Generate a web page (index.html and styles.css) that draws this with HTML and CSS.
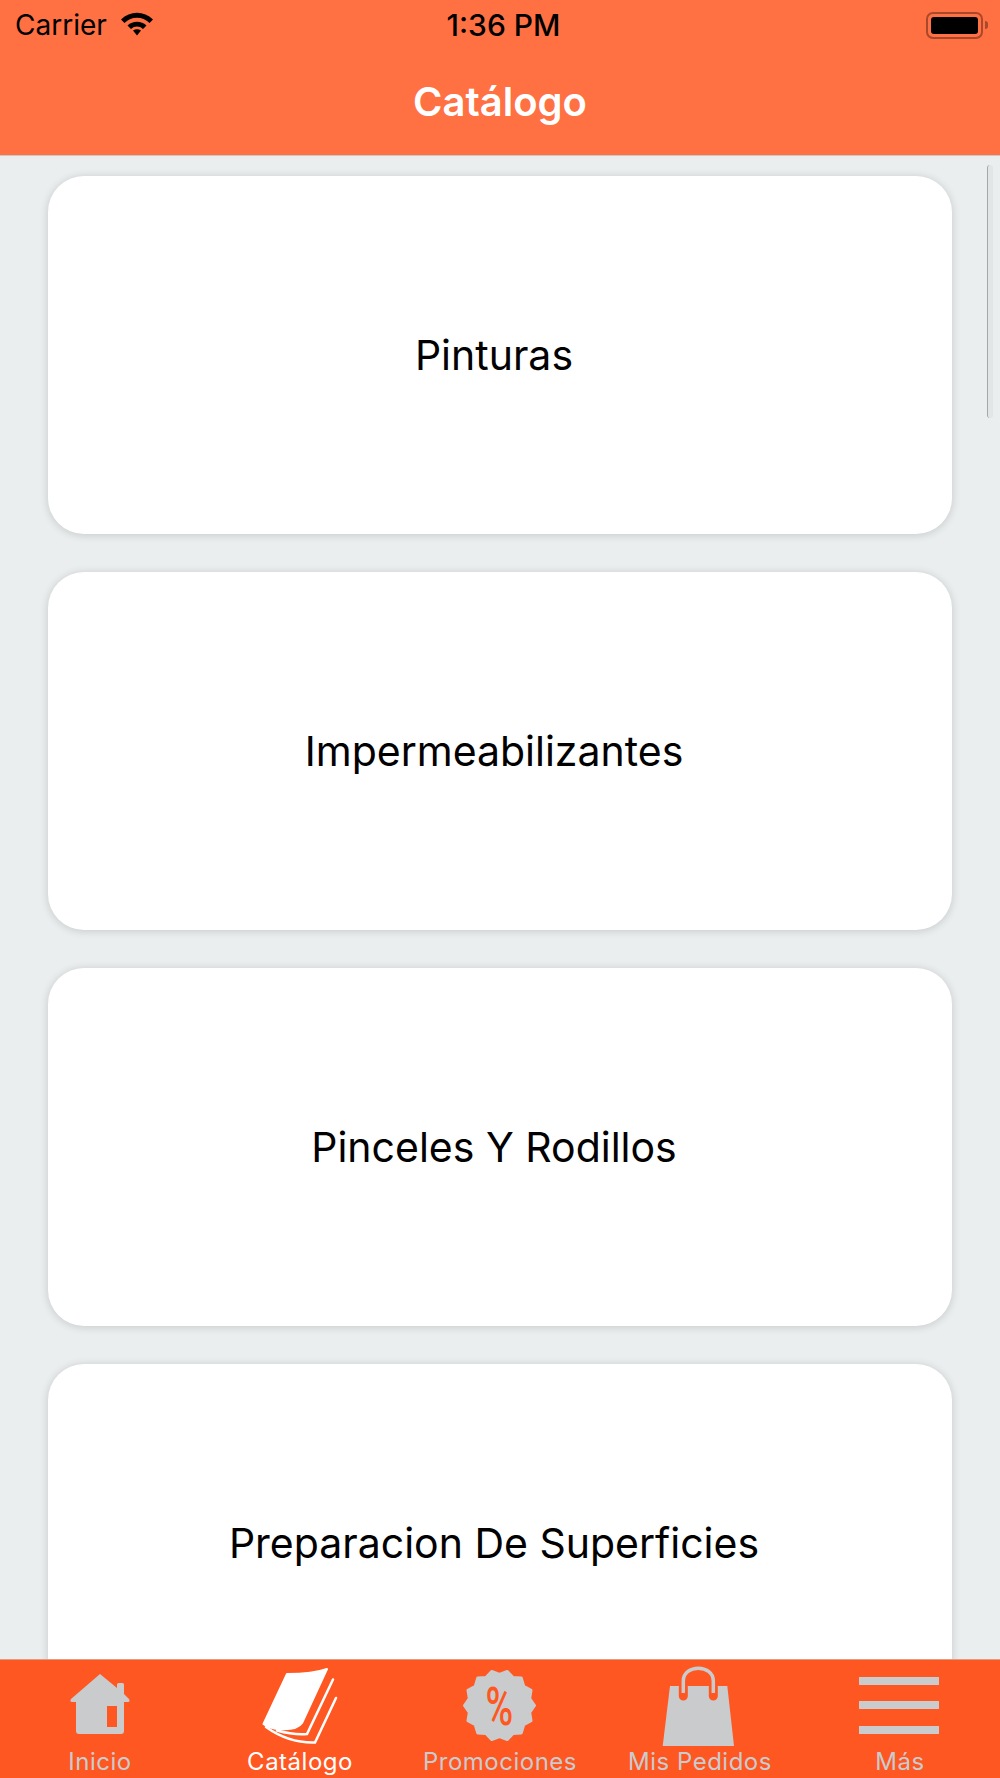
FILE: index.html
```html
<!DOCTYPE html>
<html lang="en">
<head>
  <meta charset="UTF-8">
  <title>Catálogo</title>
  <link rel="stylesheet" href="styles.css">
</head>
<body>
  <div class="app">
    <header class="top">
      <div class="status">
        <div class="status-left">
          <span>Carrier</span>
          <svg class="wifi" width="34" height="24" viewBox="0 0 34 24">
            <path d="M1 7.500C10 -1.500 24 -1.500 33 7.500L29.500 11C22.500 4 11.500 4 4.500 11Z"/>
            <path d="M7.500 13.500C12.800 8.500 21.200 8.500 26.500 13.500L23 17C19.500 13.700 14.500 13.700 11 17Z"/>
            <path d="M13 18.500C15.500 16.800 18.500 16.800 21 18.500L17 23.500Z"/>
          </svg>
        </div>
        <div class="status-time">1:36 PM</div>
        <div class="status-right">
          <div class="battery"><div class="battery-level"></div></div>
          <div class="battery-cap"></div>
        </div>
      </div>
      <h1 class="title">Catálogo</h1>
    </header>

    <main class="list">
      <div class="card">Pinturas</div>
      <div class="card">Impermeabilizantes</div>
      <div class="card">Pinceles Y Rodillos</div>
      <div class="card">Preparacion De Superficies</div>
      <div class="scrollbar"></div>
    </main>

    <nav class="tabs">
      <div class="tab">
        <svg class="tab-icon" viewBox="0 0 80 80">
          <path class="icon-fill" d="M40 7L57 21V17.500Q57 16 58.500 16H62.500Q64 16 64 17.500V27L69 32Q70.500 35 68 35H64V64Q64 67 61 67H19Q16 67 16 64V35H12Q9.500 35 11 32Z"/>
          <rect class="icon-hole" x="47" y="39" width="10" height="21"/>
        </svg>
        <span>Inicio</span>
      </div>
      <div class="tab active">
        <svg class="tab-icon" viewBox="0 0 80 80">
          <path class="book-cover" d="M27 7C42 7 56 6 67 2L42 56C38 62 28 63 17 62C12 61 7 60 3.500 57Z"/>
          <path class="book-page" d="M73 12.500L47 67C36 68 26 66 17 63.500"/>
          <path class="book-page" d="M76 31L55 75.500C37 76 20 70 6 60"/>
        </svg>
        <span>Catálogo</span>
      </div>
      <div class="tab">
        <svg class="tab-icon" viewBox="0 0 80 80">
          <polygon class="badge" points="74.500,38.500 69.700,45.400 71,53.700 63.700,57.800 61.300,65.900 53,66.400 47.300,72.600 39.500,69.500 31.700,72.600 26,66.400 17.700,65.900 15.300,57.800 8,53.700 9.300,45.400 4.500,38.500 9.300,31.600 8,23.300 15.300,19.200 17.700,11.100 26,10.600 31.700,4.400 39.500,7.500 47.300,4.400 53,10.600 61.300,11.100 63.700,19.200 71,23.300 69.700,31.600"/>
          <text class="badge-text" x="39.500" y="58" text-anchor="middle" textLength="28" lengthAdjust="spacingAndGlyphs">%</text>
        </svg>
        <span>Promociones</span>
      </div>
      <div class="tab">
        <svg class="tab-icon" viewBox="0 0 80 80">
          <path class="icon-fill" d="M10 19H67.300L74 79H2.700Z"/>
          <path class="bag-slot" d="M23.300 20V29M53.300 20V29"/>
          <path class="bag-handle" d="M23.300 26V14C23.300 -3 53.300 -3 53.300 14V26"/>
        </svg>
        <span>Mis Pedidos</span>
      </div>
      <div class="tab">
        <svg class="tab-icon" viewBox="1 0 80 80">
          <rect class="icon-fill" x="0" y="10" width="80" height="8"/>
          <rect class="icon-fill" x="0" y="34" width="80" height="8"/>
          <rect class="icon-fill" x="0" y="59" width="80" height="8"/>
        </svg>
        <span>Más</span>
      </div>
    </nav>
  </div>
</body>
</html>
```

FILE: styles.css
```css
* {
  box-sizing: border-box;
}

body {
  margin: 0;
  font-family: Inter, "Noto Sans", sans-serif;
  color: #000;
}

.app {
  display: flex;
  flex-direction: column;
  height: 100vh;
  overflow: hidden;
  background-color: #eaeeef;
}

.top {
  height: 156px;
  flex-shrink: 0;
  background-color: #ff7043;
  border-bottom: 1px solid #c9c9c9;
}

.status {
  display: grid;
  grid-template-columns: 1fr auto 1fr;
  align-items: center;
  height: 50px;
  padding: 0 12px 0 15px;
  font-size: 28px;
}

.status-left {
  display: flex;
  align-items: center;
  gap: 13px;
}

.wifi {
  fill: #000;
  margin-top: -2px;
}

.status-time {
  margin-left: 4px;
  font-size: 30px;
  font-weight: 500;
}

.status-right {
  display: flex;
  align-items: center;
  justify-content: flex-end;
  gap: 2px;
}

.battery {
  width: 57px;
  height: 27px;
  padding: 3px;
  border: 2px solid #a8492b;
  border-radius: 7px;
}

.battery-level {
  height: 100%;
  background-color: #000;
  border-radius: 3px;
}

.battery-cap {
  width: 3px;
  height: 8px;
  background-color: #a8492b;
  border-radius: 0 3px 3px 0;
}

.title {
  margin: 0;
  height: 104px;
  line-height: 104px;
  text-align: center;
  font-size: 40px;
  font-weight: 600;
  color: #fff;
}

.list {
  position: relative;
  flex: 1;
  min-height: 0;
  overflow: hidden;
  display: flex;
  flex-direction: column;
  gap: 38px;
  padding: 20px 48px 0;
}

.card {
  display: flex;
  align-items: center;
  justify-content: center;
  height: 358px;
  flex-shrink: 0;
  padding-right: 12px;
  background: #fff;
  border-radius: 36px;
  box-shadow: 0 1px 8px rgba(0, 0, 0, 0.16);
  font-size: 41px;
}

.scrollbar {
  position: absolute;
  top: 9px;
  left: 987px;
  width: 6px;
  height: 253px;
  background-color: #e2e6e7;
  border-left: 1px solid #a5a8aa;
  border-radius: 3px;
}

.tabs {
  display: grid;
  grid-template-columns: repeat(5, 1fr);
  height: 119px;
  flex-shrink: 0;
  padding-top: 7px;
  background-color: #ff5722;
  border-top: 1px solid #e39a82;
}

.tab {
  display: flex;
  flex-direction: column;
  align-items: center;
  font-size: 24px;
  letter-spacing: 0.5px;
  line-height: 30px;
  color: #c9cbcd;
}

.tab.active {
  color: #fff;
}

.tab-icon {
  width: 80px;
  height: 80px;
  flex-shrink: 0;
  overflow: visible;
}

.icon-fill {
  fill: #c9cbcd;
}

.icon-hole {
  fill: #ff5722;
}

.book-cover {
  fill: #fff;
  stroke: #fff;
  stroke-width: 2;
  stroke-linejoin: round;
}

.book-page {
  fill: none;
  stroke: #fff;
  stroke-width: 2.500;
  stroke-linecap: round;
}

.badge {
  fill: #c9cbcd;
  stroke: #c9cbcd;
  stroke-width: 3;
  stroke-linejoin: round;
}

.badge-text {
  fill: #ff5722;
  font-family: Roboto, sans-serif;
  font-size: 54px;
  font-weight: 500;
}

.bag-slot {
  fill: none;
  stroke: #ff5722;
  stroke-width: 9;
  stroke-linecap: round;
}

.bag-handle {
  fill: none;
  stroke: #c9cbcd;
  stroke-width: 3.500;
}
```
